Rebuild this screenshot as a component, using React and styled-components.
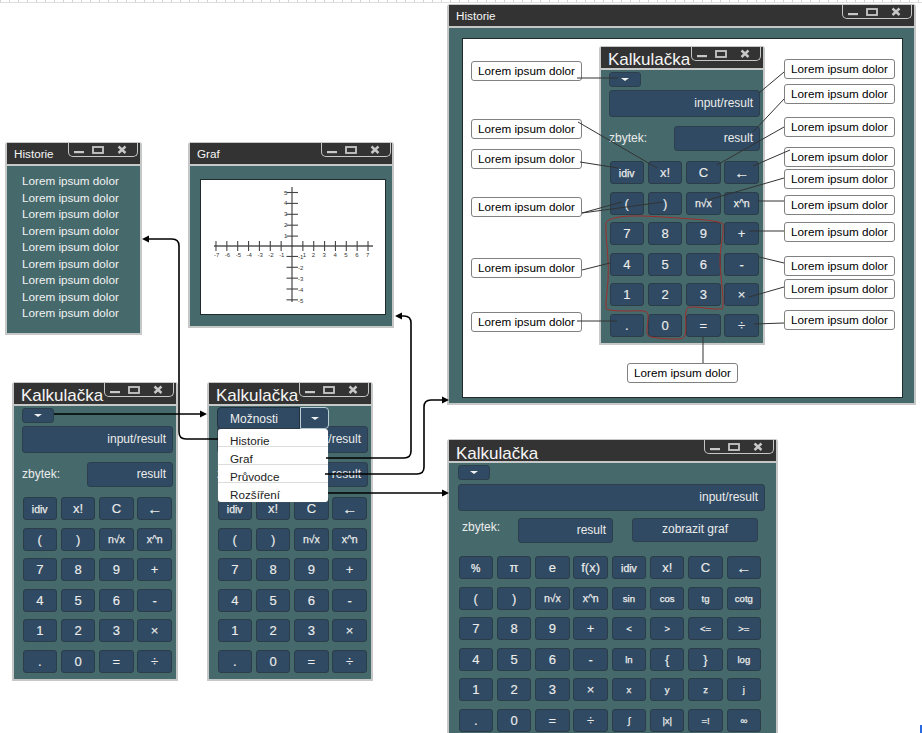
import React from "react";
import styled, { createGlobalStyle } from "styled-components";

const Global = createGlobalStyle`
  html, body { margin: 0; padding: 0; background: #fff; }
  body { font-family: "Liberation Sans", Arial, sans-serif; }
`;

const Canvas = styled.div`
  position: relative;
  width: 922px;
  height: 733px;
  overflow: hidden;
  background: #fff;
`;

const Ruler = styled.div`
  height: 2px;
  border-bottom: 1px solid #dedede;
  background: repeating-linear-gradient(90deg, #d4d4d4 0 1px, transparent 1px 9px);
`;

const Windowed = styled.section`
  position: absolute;
  left: ${(p) => p.$x}px;
  top: ${(p) => p.$y}px;
  width: ${(p) => p.$w}px;
  height: ${(p) => p.$h}px;
  box-sizing: border-box;
  border: 2px solid #c6c8c8;
  border-top-width: 1px;
  border-radius: 3px 3px 0 0;
  display: flex;
  flex-direction: column;
  background: #466a6c;
`;

const TitleBar = styled.header`
  height: 21px;
  flex: none;
  display: flex;
  justify-content: space-between;
  background: #333333;
  border-bottom: 2px solid #c6c8c8;
  padding-left: 7px;
`;

const Title = styled.h1`
  margin: 0;
  font-weight: 400;
  font-size: ${(p) => (p.$large ? 17 : 11.7)}px;
  line-height: ${(p) => p.$lh ?? 21}px;
  height: 21px;
  white-space: nowrap;
  color: #f6f6f6;
`;

const Controls = styled.div`
  width: 70px;
  height: 15px;
  margin: -1px ${(p) => p.$right ?? 2}px 0 0;
  box-sizing: border-box;
  border: 1.5px solid #c6c8c8;
  border-top: none;
  border-radius: 0 0 5px 5px;
  flex: none;
`;

const ControlIcons = () => (
  <svg width="67" height="14" viewBox="0 0 67 14" style={{ display: "block" }}>
    <rect x="5" y="9" width="10" height="2.2" fill="#c8c8c8" />
    <rect x="24" y="5" width="10" height="6" fill="none" stroke="#c8c8c8" strokeWidth="1.8" />
    <path d="M49.5 4.5l7 6.5M56.5 4.5l-7 6.5" stroke="#c8c8c8" strokeWidth="2.4" />
  </svg>
);

const CalcBody = styled.div`
  position: relative;
  flex: 1;
  display: flex;
  flex-direction: column;
  padding: 2px 7px 0 ${(p) => (p.$wide ? 9 : 8)}px;
`;

const DropButton = styled.button`
  display: flex;
  align-items: center;
  justify-content: center;
  width: 32px;
  height: 15px;
  flex: none;
  padding: 0;
  background: #2f4a62;
  border: 1px solid #2d3f4c;
  border-radius: 3px;
`;

const Caret = styled.i`
  display: block;
  width: 0;
  height: 0;
  border-left: 4px solid transparent;
  border-right: 4px solid transparent;
  border-top: 3px solid #f2f2f2;
`;

const Field = styled.div`
  box-sizing: border-box;
  width: ${(p) => p.$w}px;
  height: ${(p) => p.$h}px;
  flex: none;
  background: #2f4a62;
  border: 1.5px solid #2d3f4c;
  border-radius: 3px;
  color: #ececec;
  font-size: 12px;
  text-align: ${(p) => (p.$center ? "center" : "right")};
  line-height: ${(p) => p.$h - 3}px;
  padding: 0 ${(p) => (p.$center ? 0 : 6)}px;
`;

const InputWrap = styled.div`
  margin-top: ${(p) => (p.$wide ? 4 : 3)}px;
  flex: none;
`;

const ResultRow = styled.div`
  display: flex;
  align-items: flex-start;
  margin-top: ${(p) => (p.$wide ? 7 : 9)}px;
  height: 25px;
`;

const RestLabel = styled.span`
  color: #ececec;
  font-size: 12px;
  line-height: ${(p) => (p.$wide ? 18 : 24)}px;
  flex: none;
  width: ${(p) => (p.$wide ? 60 : 65)}px;
  padding-left: ${(p) => (p.$wide ? 4 : 0)}px;
  box-sizing: border-box;
`;

const ResultGap = styled.div`
  width: 19px;
  flex: none;
`;

const Keys = styled.div`
  display: grid;
  grid-template-columns: repeat(${(p) => p.$cols}, 34.5px);
  grid-auto-rows: 23px;
  column-gap: 3.8px;
  row-gap: 7.6px;
  margin-top: ${(p) => (p.$wide ? 13 : 10)}px;
  margin-left: 0.5px;
`;

const Key = styled.div`
  box-sizing: border-box;
  display: flex;
  align-items: center;
  justify-content: center;
  background: #2f4a62;
  border: 1.5px solid #2b3d48;
  border-radius: 3px;
  color: #ececec;
  font-size: ${(p) => p.$size}px;
  -webkit-text-stroke: ${(p) => (p.$size < 11 ? 0.25 : 0.15)}px #ececec;
`;

const keySize = (k) => {
  if (["sin", "cos", "tg", "cotg", "ln", "log", "<", ">", "<=", ">=", "x", "y", "z", "j", "=!", "|x|", "∞", "∫"].includes(k)) return 9.5;
  if (["idiv", "%", "n√x", "x^n"].includes(k)) return 10.5;
  if (k === "←") return 15;
  return 13;
};

const basicKeys = ["idiv", "x!", "C", "←", "(", ")", "n√x", "x^n", "7", "8", "9", "+", "4", "5", "6", "-", "1", "2", "3", "×", ".", "0", "=", "÷"];

const wideKeys = [
  "%", "π", "e", "f(x)", "idiv", "x!", "C", "←",
  "(", ")", "n√x", "x^n", "sin", "cos", "tg", "cotg",
  "7", "8", "9", "+", "<", ">", "<=", ">=",
  "4", "5", "6", "-", "ln", "{", "}", "log",
  "1", "2", "3", "×", "x", "y", "z", "j",
  ".", "0", "=", "÷", "∫", "|x|", "=!", "∞",
];

const Split = styled.div`
  position: relative;
  z-index: 2;
  display: flex;
  width: 112px;
  height: 22px;
  margin-top: -1px;
  margin-bottom: -6px;
  flex: none;
`;

const SplitLabel = styled.div`
  flex: 1;
  background: #2f4a62;
  border: 1px solid #22333f;
  border-radius: 4px 0 0 4px;
  color: #f0f0f0;
  font-size: 12px;
  line-height: 23px;
  padding-left: 12px;
`;

const SplitArrow = styled.div`
  width: 29px;
  box-sizing: border-box;
  display: flex;
  align-items: center;
  justify-content: center;
  background: #2f4a62;
  border: 1px solid #b9cdd6;
  border-radius: 0 4px 4px 0;
`;

const Menu = styled.ul`
  position: absolute;
  z-index: 3;
  left: 9px;
  top: 23px;
  width: 110px;
  height: 73px;
  box-sizing: border-box;
  margin: 0;
  padding: 0;
  list-style: none;
  background: #fff;
  border-radius: 3px;
  overflow: hidden;
  box-shadow: 0 0 1px #888;
`;

const MenuItem = styled.li`
  height: 18px;
  box-sizing: border-box;
  border-bottom: 1.5px solid #dcdcdc;
  font-size: 11.7px;
  line-height: 24px;
  color: #222;
  padding-left: 12px;
  &:last-child { border-bottom: none; }
`;

const Calc = ({ x, y, wide, options }) => (
  <Windowed $x={x} $y={y} $w={wide ? 331 : 166} $h={wide ? 320 : 299}>
    <TitleBar>
      <Title $large $lh={wide ? 28 : 26}>Kalkulačka</Title>
      <Controls><ControlIcons /></Controls>
    </TitleBar>
    <CalcBody $wide={wide}>
      {options ? (
        <Split>
          <SplitLabel>Možnosti</SplitLabel>
          <SplitArrow><Caret /></SplitArrow>
        </Split>
      ) : (
        <DropButton aria-label="menu"><Caret /></DropButton>
      )}
      {options && (
        <Menu>
          {["Historie", "Graf", "Průvodce", "Rozšíření"].map((m) => <MenuItem key={m}>{m}</MenuItem>)}
        </Menu>
      )}
      <InputWrap $wide={wide}>
        <Field $w={wide ? 307 : 151} $h={27}>input/result</Field>
      </InputWrap>
      <ResultRow $wide={wide}>
        <RestLabel $wide={wide}>zbytek:</RestLabel>
        <Field $w={wide ? 95 : 86} $h={25}>result</Field>
        {wide && <ResultGap />}
        {wide && <Field $w={126} $h={24} $center>zobrazit graf</Field>}
      </ResultRow>
      <Keys $cols={wide ? 8 : 4} $wide={wide}>
        {(wide ? wideKeys : basicKeys).map((k, i) => (
          <Key key={i} $size={keySize(k)}>{k}</Key>
        ))}
      </Keys>
    </CalcBody>
  </Windowed>
);

const ListBody = styled.div`
  flex: 1;
  padding: 7px 0 0 15px;
  color: #f2f2f2;
  font-size: 11.7px;
  line-height: 16.5px;
`;

const ListLine = styled.div``;

const PlotBody = styled.div`
  flex: 1;
  padding: 13px 0 0 10px;
`;

const Plot = styled.div`
  width: 186px;
  height: 136px;
  box-sizing: border-box;
  background: #fff;
  border: 1px solid #1f2a2c;
`;

const BigBody = styled.div`
  flex: 1;
  padding: 10px 0 0 13px;
`;

const Sheet = styled.div`
  width: 441px;
  height: 360px;
  box-sizing: border-box;
  background: #fff;
  border: 1px solid #1f2a2c;
`;

const Note = styled.div`
  position: absolute;
  left: ${(p) => p.$x}px;
  top: ${(p) => p.$y}px;
  width: 111px;
  height: 20px;
  box-sizing: border-box;
  background: #fff;
  border: 1.5px solid #808080;
  border-radius: 3px;
  color: #000;
  font-size: 11.7px;
  line-height: 18px;
  text-align: center;
  white-space: nowrap;
`;

const Overlay = styled.svg`
  position: absolute;
  left: 0;
  top: 0;
  z-index: 5;
  pointer-events: none;
`;

const Corner = styled.div`
  position: absolute;
  right: 0;
  bottom: 0;
  width: 2px;
  height: 8px;
  background: #2a6ae0;
`;

const Graph = () => {
  const xs = Array.from({ length: 15 }, (_, i) => i - 7);
  const ys = [5, 4, 3, 2, 1, -1, -2, -3, -4, -5];
  const X = (v) => 292 + v * 10.86;
  const Y = (v) => (v > 0 ? 247 - v * 10.9 : 245.6 - v * 10.85);
  const tick = { fontFamily: "Liberation Sans", fontSize: 6, fill: "#333" };
  return (
    <svg width="184" height="134" viewBox="201 180 184 134" style={{ display: "block" }}>
      <path d="M214 246H373" stroke="#555" strokeWidth="1.4" />
      <path d="M292 187V302" stroke="#222" strokeWidth="1" />
      {xs.filter((v) => v !== 0).map((v) => (
        <g key={v}>
          <path d={`M${X(v)} 241V251`} stroke="#444" strokeWidth="1.1" />
          <text x={X(v) - 2 + (v === 1 ? 2 : 0)} y={257} style={tick}>{v}</text>
        </g>
      ))}
      {ys.map((v) => (
        <g key={v}>
          <path d={`M286.5 ${Y(v)}H298`} stroke="#444" strokeWidth="1.1" />
          <text x={v > 0 ? 284 : 298} y={Y(v) + (v > 0 ? 2 : 3)} style={tick}>{v}</text>
        </g>
      ))}
    </svg>
  );
};

const smooth = (pts) => {
  const n = pts.length;
  let d = `M${pts[0][0]} ${pts[0][1]}`;
  for (let i = 0; i < n; i++) {
    const p0 = pts[(i - 1 + n) % n], p1 = pts[i], p2 = pts[(i + 1) % n], p3 = pts[(i + 2) % n];
    d += `C${p1[0] + (p2[0] - p0[0]) / 6} ${p1[1] + (p2[1] - p0[1]) / 6} ${p2[0] - (p3[0] - p1[0]) / 6} ${p2[1] - (p3[1] - p1[1]) / 6} ${p2[0]} ${p2[1]}`;
  }
  return d + "Z";
};

const redLoop = [
  [606, 230], [609, 220], [632, 216], [678, 218], [718, 222], [723, 230], [720, 260], [723, 303], [718, 309],
  [692, 307], [686, 312], [685, 335], [675, 339], [652, 337], [647, 332], [648, 315], [643, 311], [625, 311],
  [610, 310], [606, 306], [608, 280], [608, 260],
];

const leaders = [
  [577, 78, 618, 78], [784, 72, 759, 93], [784, 99, 753, 132], [784, 127, 717, 165], [790, 150, 753, 166],
  [784, 178, 708, 200], [578, 122, 657, 168], [580, 162, 618, 168], [582, 213, 622, 202], [582, 213, 663, 202],
  [784, 201, 758, 201], [784, 231, 749, 231], [784, 263, 759, 257], [784, 287, 749, 297], [784, 323, 754, 324],
  [582, 270, 610, 263], [577, 321, 617, 321], [703, 337, 703, 363],
];

const arrows = [
  "M54 414H201",
  "M218 439H186Q179 439 179 432V246Q179 239 172 239H148",
  "M326 458H404Q411 458 411 451V323Q411 316 404 316H401",
  "M325 474H417Q424 474 424 467V407Q424 400 431 400H443",
  "M328 493H443",
];

const heads = [
  "207,414 200,410.5 200,417.5",
  "142,239 149,235.5 149,242.5",
  "395,316 402,312.5 402,319.5",
  "449,400 442,396.5 442,403.5",
  "449,493 442,489.5 442,496.5",
];

const noteSpots = [
  [471, 61], [471, 119], [471, 149], [471, 197], [471, 258], [471, 312],
  [784, 59], [784, 84], [784, 117], [784, 147], [784, 169], [784, 195], [784, 222], [784, 256], [784, 279], [784, 310],
  [627, 363],
];

export default function App() {
  return (
    <Canvas>
      <Global />
      <Ruler />

      <Windowed $x={5} $y={142} $w={137} $h={193}>
        <TitleBar>
          <Title>Historie</Title>
          <Controls><ControlIcons /></Controls>
        </TitleBar>
        <ListBody>
          {Array.from({ length: 9 }, (_, i) => <ListLine key={i}>Lorem ipsum dolor</ListLine>)}
        </ListBody>
      </Windowed>

      <Windowed $x={188} $y={142} $w={206} $h={186}>
        <TitleBar>
          <Title>Graf</Title>
          <Controls $right={1}><ControlIcons /></Controls>
        </TitleBar>
        <PlotBody>
          <Plot><Graph /></Plot>
        </PlotBody>
      </Windowed>

      <Calc x={12} y={382} />
      <Calc x={207} y={382} options />
      <Calc x={447} y={439} wide />

      <Windowed $x={447} $y={4} $w={469} $h={401}>
        <TitleBar>
          <Title>Historie</Title>
          <Controls><ControlIcons /></Controls>
        </TitleBar>
        <BigBody>
          <Sheet />
        </BigBody>
      </Windowed>

      <Calc x={599} y={46} />

      {noteSpots.map(([x, y]) => <Note key={`${x}-${y}`} $x={x} $y={y}>Lorem ipsum dolor</Note>)}

      <Overlay width="922" height="733" viewBox="0 0 922 733">
        <path d={smooth(redLoop)} fill="none" stroke="#a02c2c" strokeWidth="1" />
        {leaders.map(([a, b, c, d], i) => (
          <line key={i} x1={a} y1={b} x2={c} y2={d} stroke="#333" strokeWidth="1" />
        ))}
        {arrows.map((d) => <path key={d} d={d} fill="none" stroke="#000" strokeWidth="1.6" />)}
        {heads.map((p) => <polygon key={p} points={p} fill="#000" />)}
      </Overlay>

      <Corner />
    </Canvas>
  );
}
